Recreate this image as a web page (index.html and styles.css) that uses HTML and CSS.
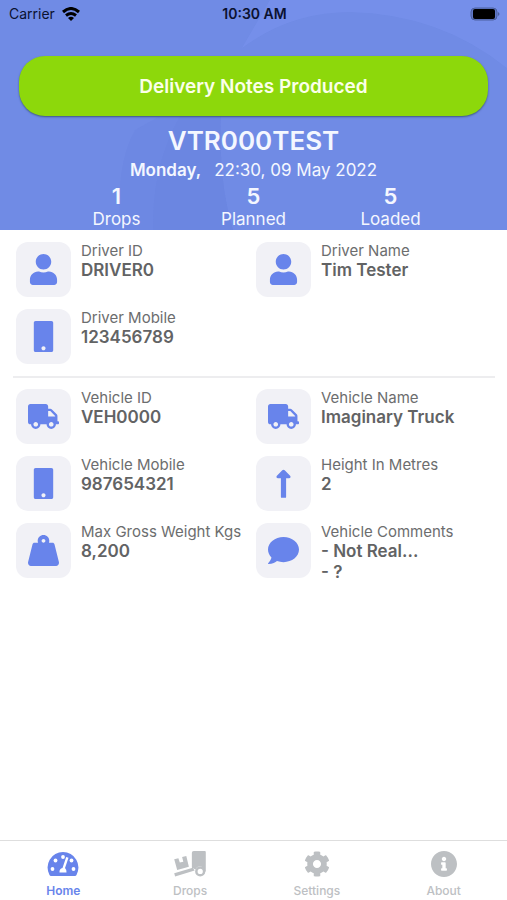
FILE: index.html
```html
<!DOCTYPE html>
<html lang="en">
<head>
<meta charset="utf-8">
<meta name="viewport" content="width=device-width, initial-scale=1">
<title>Delivery Home</title>
<link rel="stylesheet" href="styles.css">
</head>
<body>
<svg class="sprite" aria-hidden="true">
  <symbol id="user" viewBox="0 0 448 512"><path d="M224 256c70.7 0 128-57.3 128-128S294.7 0 224 0 96 57.3 96 128s57.3 128 128 128zm89.6 32h-16.7c-22.2 10.2-46.9 16-72.9 16s-50.6-5.8-72.9-16h-16.7C60.2 288 0 348.2 0 422.4V464c0 26.5 21.5 48 48 48h352c26.5 0 48-21.5 48-48v-41.6c0-74.2-60.2-134.4-134.4-134.4z"/></symbol>
  <symbol id="mobile" viewBox="0 0 320 512"><path d="M290 0H30C12 0 0 12 0 30v452c0 18 12 30 30 30h260c18 0 30-12 30-30V30c0-18-12-30-30-30zM160 484c-19 0-34-15-34-34s15-34 34-34 34 15 34 34-15 34-34 34z"/></symbol>
  <symbol id="truck" viewBox="0 0 640 512"><path d="M624 352h-16V243.900c0-12.700-5.100-24.900-14.100-33.900L494 110.100c-9-9-21.200-14.100-33.900-14.100H416V48c0-26.500-21.500-48-48-48H48C21.500 0 0 21.500 0 48v320c0 26.500 21.500 48 48 48h16c0 53 43 96 96 96s96-43 96-96h128c0 53 43 96 96 96s96-43 96-96h48c8.800 0 16-7.200 16-16v-32c0-8.800-7.200-16-16-16zM160 464c-26.500 0-48-21.500-48-48s21.500-48 48-48 48 21.500 48 48-21.500 48-48 48zm320 0c-26.500 0-48-21.500-48-48s21.500-48 48-48 48 21.500 48 48-21.500 48-48 48zm80-208H416V144h44.100l99.900 99.900V256z"/></symbol>
  <symbol id="arrow" viewBox="0 0 256 512"><path d="M85 170V478c0 9 6 14 14 14h58c8 0 14-5 14-14V170h48c23 0 34-26 18-42l-89-89c-11-11-29-11-40 0l-89 89c-16 16-5 42 18 42H85z"/></symbol>
  <symbol id="weight" viewBox="0 0 512 512"><path d="M510.280 445.860l-73.030-292.130c-3.800-15.190-16.440-25.720-30.870-25.720h-60.250c3.570-10.050 5.880-20.720 5.880-32 0-53.020-42.980-96-96-96s-96 42.980-96 96c0 11.280 2.300 21.950 5.880 32h-60.250c-14.430 0-27.080 10.540-30.870 25.720L1.720 445.860C-6.610 479.170 16.380 512 48.030 512h415.950c31.640 0 54.630-32.830 46.300-66.140zM256 128c-17.640 0-32-14.360-32-32s14.360-32 32-32 32 14.360 32 32-14.360 32-32 32z"/></symbol>
  <symbol id="comment" viewBox="0 0 512 512"><path d="M256 32C114.600 32 0 125.100 0 240c0 49.600 21.400 95 57 130.700C44.500 421.100 2.700 466 2.200 466.500c-2.200 2.300-2.800 5.700-1.500 8.700S4.800 480 8 480c66.300 0 116-31.800 140.600-51.400 32.700 12.300 69 19.400 107.400 19.400 141.400 0 256-93.100 256-208S397.400 32 256 32z"/></symbol>
</svg>

<div class="app">
  <header class="hero">
    <svg class="hero-art" viewBox="0 0 507 230" preserveAspectRatio="none" aria-hidden="true">
      <path class="light" d="M242 48Q290 12 350 12Q440 14 507 68V0H270Z"/>
      <path class="dark" d="M121 230Q115 165 135 130L160 116H221Q218 180 233 230Z"/>
      <path class="dark" d="M153 230Q152 165 180 116H221Q218 180 233 230Z"/>
    </svg>
    <div class="status">
      <span class="carrier">Carrier
        <svg class="wifi" viewBox="0 0 18 14" aria-hidden="true"><path d="M1 5Q9-2 17 5" /><path d="M4 8.500Q9 4.500 14 8.500"/><path class="solid" d="M6 11Q9 8.500 12 11L9 14Z"/></svg>
      </span>
      <time class="clock">10:30 AM</time>
      <svg class="battery" viewBox="0 0 30 14" aria-hidden="true"><rect class="shell" x="1" y="1" width="26" height="12" rx="4"/><rect x="3" y="2" width="22" height="10" rx="2"/><path class="tip" d="M28 5Q31 7 28 9Z"/></svg>
    </div>
    <button class="banner" type="button">Delivery Notes Produced</button>
    <h1>VTR000TEST</h1>
    <p class="date"><b>Monday,</b><span>22:30, 09 May 2022</span></p>
    <dl class="counts">
      <div><dt>Drops</dt><dd>1</dd></div>
      <div><dt>Planned</dt><dd>5</dd></div>
      <div><dt>Loaded</dt><dd>5</dd></div>
    </dl>
  </header>

  <main>
    <dl class="details">
      <div class="item"><span class="tile"><svg><use href="#user"/></svg></span><div><dt>Driver ID</dt><dd>DRIVER0</dd></div></div>
      <div class="item"><span class="tile"><svg><use href="#user"/></svg></span><div><dt>Driver Name</dt><dd>Tim Tester</dd></div></div>
      <div class="item"><span class="tile"><svg><use href="#mobile"/></svg></span><div><dt>Driver Mobile</dt><dd>123456789</dd></div></div>
    </dl>
    <hr>
    <dl class="details">
      <div class="item"><span class="tile"><svg><use href="#truck"/></svg></span><div><dt>Vehicle ID</dt><dd>VEH0000</dd></div></div>
      <div class="item"><span class="tile"><svg><use href="#truck"/></svg></span><div><dt>Vehicle Name</dt><dd>Imaginary Truck</dd></div></div>
      <div class="item"><span class="tile"><svg><use href="#mobile"/></svg></span><div><dt>Vehicle Mobile</dt><dd>987654321</dd></div></div>
      <div class="item"><span class="tile"><svg><use href="#arrow"/></svg></span><div><dt>Height In Metres</dt><dd>2</dd></div></div>
      <div class="item"><span class="tile"><svg><use href="#weight"/></svg></span><div><dt>Max Gross Weight Kgs</dt><dd>8,200</dd></div></div>
      <div class="item"><span class="tile"><svg><use href="#comment"/></svg></span><div><dt>Vehicle Comments</dt><dd>- Not Real...<br>- ?</dd></div></div>
    </dl>
  </main>

  <nav class="tabs">
    <a class="active" href="#home" aria-current="page">
      <svg viewBox="0 0 32 26" aria-hidden="true"><path d="M16 1A15.500 15.500 0 0 0 2.500 24Q3 25 4 25H28Q29 25 29.500 24A15.500 15.500 0 0 0 16 1Z"/><g class="cut"><circle cx="5.500" cy="18" r="1.900"/><circle cx="8.500" cy="9.500" r="1.900"/><circle cx="16" cy="6" r="1.900"/><circle cx="24.500" cy="9.500" r="1.900"/><circle cx="26.500" cy="18" r="1.900"/><path d="M19.200 6L21.500 6.800L18 17Q19.800 18.500 19.500 21.500H12.500Q12.200 17.500 15.500 17Z"/></g></svg>
      Home</a>
    <a href="#drops">
      <svg viewBox="0 0 34 28" aria-hidden="true"><path d="M21 0H33Q34 0 34 1V22H32A4.500 4.500 0 0 0 23 20L19 18V2Q19 0 21 0Z"/><path d="M0 24L20 18L22 21L1 27.500Z"/><path d="M0 9L4.500 7.700L6 12.500L9.800 11.500L8.500 6.500L13 5.300L15.800 17L3.200 20.500Z"/><path fill-rule="evenodd" d="M28 16.500A5.500 5.500 0 1 0 28 27.500A5.500 5.500 0 1 0 28 16.500ZM28 19.200A2.800 2.800 0 1 1 28 24.800A2.800 2.800 0 1 1 28 19.200Z"/></svg>
      Drops</a>
    <a href="#settings">
      <svg viewBox="0 0 512 512" aria-hidden="true"><path d="M487.400 315.700l-42.600-24.600c4.300-23.200 4.300-47 0-70.200l42.600-24.600c4.900-2.800 7.100-8.600 5.500-14-11.100-35.600-30-67.800-54.700-94.600-3.800-4.100-10-5.100-14.800-2.300L380.800 110c-17.900-15.400-38.500-27.300-60.800-35.100V25.800c0-5.600-3.900-10.500-9.400-11.700-36.700-8.200-74.300-7.800-109.200 0-5.500 1.200-9.400 6.100-9.400 11.700V75c-22.200 7.900-42.800 19.800-60.800 35.100L88.700 85.500c-4.900-2.800-11-1.900-14.800 2.300-24.700 26.700-43.600 58.900-54.700 94.600-1.700 5.400.6 11.200 5.500 14L67.300 221c-4.300 23.200-4.300 47 0 70.200l-42.600 24.600c-4.900 2.800-7.100 8.600-5.500 14 11.100 35.600 30 67.800 54.700 94.600 3.800 4.100 10 5.100 14.800 2.300l42.600-24.600c17.900 15.400 38.500 27.300 60.800 35.100v49.200c0 5.600 3.900 10.500 9.400 11.700 36.700 8.200 74.300 7.800 109.200 0 5.500-1.200 9.400-6.100 9.400-11.700v-49.200c22.200-7.900 42.800-19.800 60.800-35.100l42.600 24.600c4.900 2.800 11 1.900 14.800-2.300 24.700-26.700 43.600-58.900 54.700-94.600 1.500-5.500-.7-11.300-5.600-14.100zM256 336c-44.100 0-80-35.900-80-80s35.900-80 80-80 80 35.900 80 80-35.900 80-80 80z"/></svg>
      Settings</a>
    <a href="#about">
      <svg viewBox="8 8 496 496" aria-hidden="true"><path d="M256 8C119.043 8 8 119.083 8 256c0 136.997 111.043 248 248 248s248-111.003 248-248C504 119.083 392.957 8 256 8zm0 110c23.196 0 42 18.804 42 42s-18.804 42-42 42-42-18.804-42-42 18.804-42 42-42zm56 254c0 6.627-5.373 12-12 12h-88c-6.627 0-12-5.373-12-12v-24c0-6.627 5.373-12 12-12h12v-64h-12c-6.627 0-12-5.373-12-12v-24c0-6.627 5.373-12 12-12h64c6.627 0 12 5.373 12 12v100h12c6.627 0 12 5.373 12 12v24z"/></svg>
      About</a>
  </nav>
</div>
</body>
</html>
```
FILE: styles.css
```css
* { box-sizing: border-box; }

body {
  margin: 0;
  background: #fff;
  color: #626364;
  font-family: Inter, "Liberation Sans", sans-serif;
}

h1, p, dl, dd { margin: 0; }

svg { display: block; }

.sprite { display: none; }

.app {
  display: flex;
  flex-direction: column;
  min-height: 100vh;
}

/* Header */
.hero {
  position: relative;
  isolation: isolate;
  background: #708be5;
  color: #f4f7ff;
  text-align: center;
}

.hero-art {
  position: absolute;
  inset: 0;
  z-index: -1;
  width: 100%;
  height: 100%;
}

.light { fill: #7892ec; opacity: 0.7; }
.dark { fill: #6681df; opacity: 0.3; }

.status {
  display: grid;
  grid-template-columns: 1fr auto 1fr;
  align-items: center;
  height: 27px;
  padding: 0 7px 0 9px;
  color: #0b1230;
  font-size: 14px;
}

.carrier {
  display: flex;
  align-items: center;
  gap: 7px;
}

.wifi {
  width: 18px;
  height: 14px;
  fill: none;
  stroke: #000;
  stroke-width: 3;
}

.wifi .solid { fill: #000; stroke: none; }

.clock { font-weight: 600; }

.battery {
  justify-self: end;
  width: 30px;
  height: 14px;
}

.battery .shell { fill: #6078c8; stroke: #4c609f; }
.battery .tip { fill: #4c609f; }

.banner {
  display: block;
  width: calc(100% - 38px);
  height: 60px;
  margin: 29px 19px 9px;
  padding: 0;
  border: 0;
  border-radius: 26px;
  background: #8dd80b;
  box-shadow: 0 1px 2px #3d5a80;
  color: #fbffe8;
  font: inherit;
  font-size: 19px;
  font-weight: 600;
}

h1 {
  font-size: 26px;
  font-weight: 600;
  line-height: 32px;
}

.date {
  display: flex;
  justify-content: center;
  gap: 13px;
  font-size: 17px;
  line-height: 26px;
}

.date b { font-weight: 600; }

.counts {
  display: grid;
  grid-template-columns: repeat(3, 1fr);
  padding: 0 48px;
}

.counts div {
  display: flex;
  flex-direction: column-reverse;
}

.counts dt {
  font-size: 17px;
  line-height: 21px;
}

.counts dd {
  font-size: 22px;
  font-weight: 600;
  line-height: 26px;
}

/* Details */
main {
  flex: 1;
  padding: 12px 12px 12px 13px;
}

.details {
  display: grid;
  grid-template-columns: 1fr 1fr;
  gap: 12px 1px;
  padding-left: 3px;
}

.item {
  display: flex;
  gap: 10px;
  min-height: 55px;
  max-height: 55px;
}

.tile {
  display: grid;
  flex: none;
  place-items: center;
  width: 55px;
  height: 55px;
  border-radius: 12px;
  background: #f1f1f6;
}

.tile svg {
  width: 31px;
  height: 31px;
  fill: #6884eb;
}

.item dt {
  color: #6c6d6e;
  font-size: 15px;
  line-height: 18px;
}

.item dd {
  font-size: 17px;
  font-weight: 600;
  line-height: 21px;
}

hr {
  height: 2px;
  margin: 12px 0 11px;
  border: 0;
  background: #ededef;
}

/* Tab bar */
.tabs {
  display: grid;
  grid-template-columns: repeat(4, 1fr);
  height: 60px;
  border-top: 1px solid #dedede;
}

.tabs a {
  display: flex;
  flex-direction: column;
  align-items: center;
  gap: 6px;
  padding-top: 10px;
  color: #bdc0c3;
  font-size: 12px;
  font-weight: 500;
  line-height: 16px;
  text-decoration: none;
}

.tabs svg {
  width: 34px;
  height: 26px;
  fill: currentColor;
}

.tabs .active {
  color: #6884eb;
  font-weight: 600;
}

.tabs .cut { fill: #fff; }
```
